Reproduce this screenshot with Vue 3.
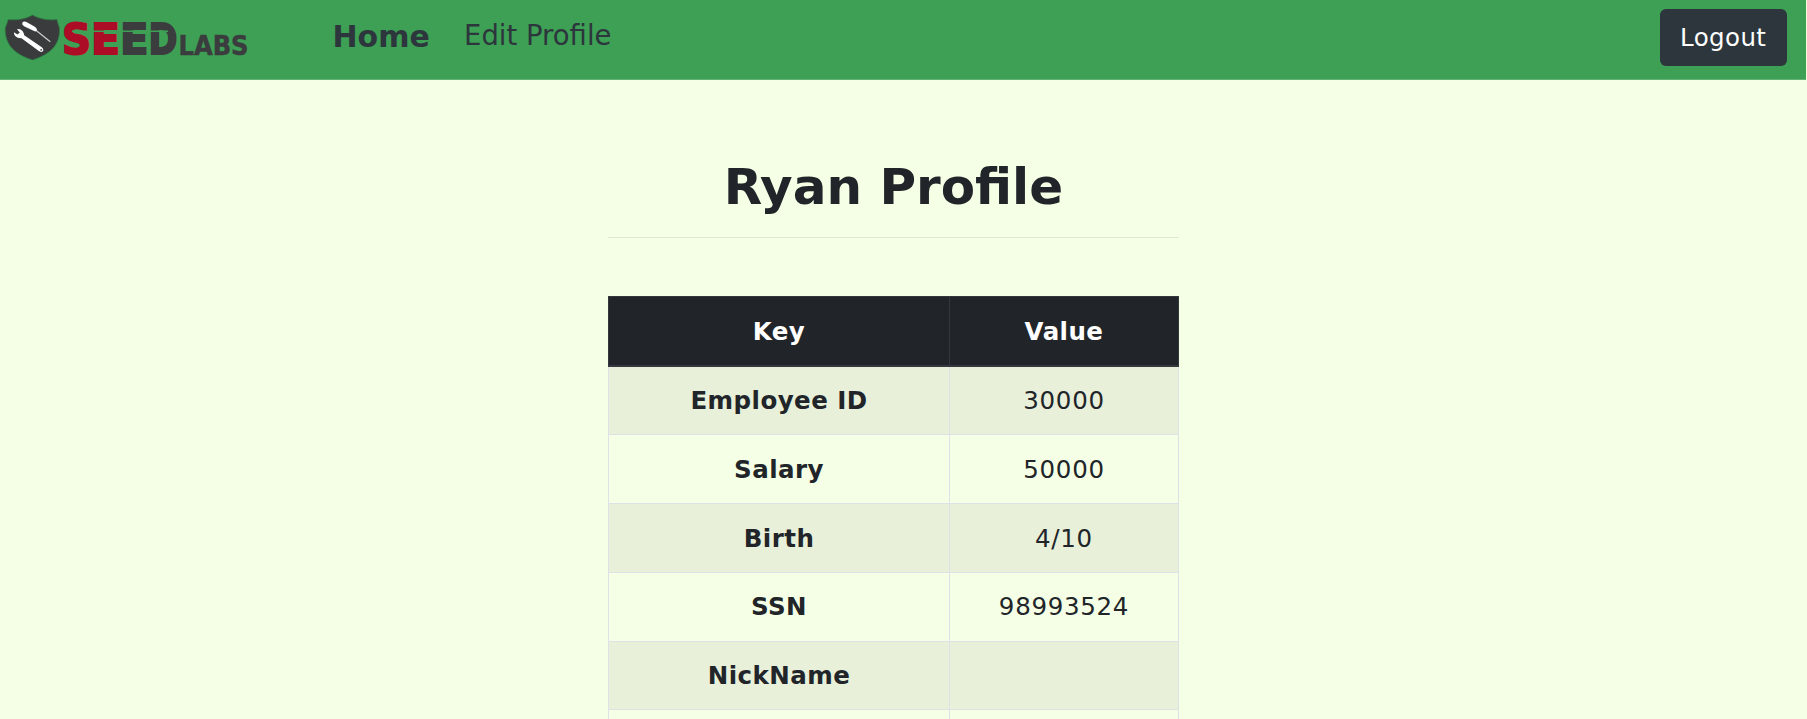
<script setup>
const rows = [
  ['Employee ID', '30000'],
  ['Salary', '50000'],
  ['Birth', '4/10'],
  ['SSN', '98993524'],
  ['NickName', ''],
  ['', ''],
]
</script>

<template>
  <div class="page">
    <nav class="navbar">
      <a class="brand">
        <svg width="260" height="79" viewBox="0 0 260 79">
          <path
            d="M32.500 15C26 19 17 20.500 8 19.500C7 25 4.500 27 5.200 31C6 47 17 55 32.500 60C48 55 59 47 59.600 31C60 27 58 25 57 19.500C48 20.500 39 19 32.500 15Z"
            fill="#393b3d" stroke="#2f7f45" stroke-width=".8"
          />
          <path d="M22.300 22.800Q23.500 20.800 26.500 21.900L34.800 26.800Q38 29.500 36.800 31Q35.300 32.200 32.500 30.300L24 26.200Q21.500 24.600 22.300 22.800Z" fill="#fff" />
          <path d="M36.500 30.800L50.300 41.800" fill="none" stroke="#c9c9c9" stroke-width="1.300" />
          <path
            d="M17 29.200Q20.500 28.700 22.700 31.200Q24 33 24.200 35.200L41.800 47.300Q44.500 50 42.500 51.500Q41 52.600 38.500 50.800L21.500 38.300Q17.500 38.500 15.200 36Q13.700 34.200 14 32.200L17.500 34.400L19.800 32.500Z"
            fill="#fff"
          />
          <circle cx="41.200" cy="49.800" r=".9" fill="#393b3d" />
          <g class="mark">
            <text x="62" y="53.800" textLength="29" lengthAdjust="spacingAndGlyphs" class="red">S</text>
            <text x="91" y="53.800" textLength="29" lengthAdjust="spacingAndGlyphs" class="red">E</text>
            <text x="120" y="53.800" textLength="28.500" lengthAdjust="spacingAndGlyphs" class="dark">E</text>
            <text x="148.500" y="53.800" textLength="29" lengthAdjust="spacingAndGlyphs" class="dark">D</text>
            <text x="178.500" y="54.500" textLength="70" lengthAdjust="spacingAndGlyphs" class="labs">LABS</text>
          </g>
          <path d="M72 31.300H168" stroke="#3ea055" stroke-width="1.500" />
        </svg>
      </a>
      <a class="home">Home</a>
      <a class="edit">Edit Profile</a>
      <button class="logout">Logout</button>
    </nav>
    <main class="content">
      <h1>Ryan Profile</h1>
      <hr />
      <table>
        <thead>
          <tr><th>Key</th><th>Value</th></tr>
        </thead>
        <tbody>
          <tr v-for="[key, value] in rows" :key="key">
            <th>{{ key }}</th>
            <td>{{ value }}</td>
          </tr>
        </tbody>
      </table>
    </main>
  </div>
</template>

<style>
body { margin: 0; overflow: hidden; }
</style>

<style scoped>
.page {
  height: 719px;
  overflow: hidden;
  background: #f4ffe5;
  color: #212529;
  font-family: "DejaVu Sans", sans-serif;
}
.navbar {
  display: flex;
  box-sizing: border-box;
  height: 80px;
  margin-right: 1px;
  background: #3ea055;
  border-bottom: 1px solid #64b275;
  color: #2c363c;
}
.brand { width: 332.500px; height: 79px; flex: none; }
.brand svg { display: block; }
.mark { font-weight: 700; }
.red, .dark { font-size: 43.500px; stroke-width: 2px; }
.red { fill: #ad0c27; stroke: #ad0c27; }
.dark, .labs { fill: #3a3c3e; stroke: #3a3c3e; }
.labs { font-size: 26px; stroke-width: .5px; }
.home { font-size: 30px; font-weight: 700; line-height: 36px; padding-top: 19px; width: 131.500px; flex: none; }
.edit { font-size: 27.500px; line-height: 36px; padding-top: 17px; }
.logout {
  width: 126.500px;
  height: 57.500px;
  margin: 8.500px 19.500px 0 auto;
  padding: 0;
  border: 0;
  border-radius: 6px;
  background: #2c363c;
  color: #fff;
  font: 24.500px/58px "DejaVu Sans", sans-serif;
  letter-spacing: .4px;
}
.content { width: 571px; margin-left: 608px; text-align: center; }
h1 { margin: 0; padding-top: 77px; font-size: 50px; line-height: 60px; height: 60px; }
hr { margin: 20px 0 0; border: 0; height: 1px; background: #dfe8d1; }
table {
  width: 571px;
  margin-top: 58px;
  border-collapse: collapse;
  table-layout: fixed;
  font-size: 24.500px;
  letter-spacing: .7px;
}
th, td { box-sizing: border-box; padding: 1px 0 0; height: 68.700px; border: 1px solid #dee2e6; line-height: 30px; }
th { letter-spacing: .45px; }
th:first-child { width: 341px; }
thead th { height: 69.800px; background: #212529; color: #fff; border-color: #32383e; border-bottom-width: 2px; }
tbody tr:nth-child(odd) { background: #e8f0d9; }
</style>
